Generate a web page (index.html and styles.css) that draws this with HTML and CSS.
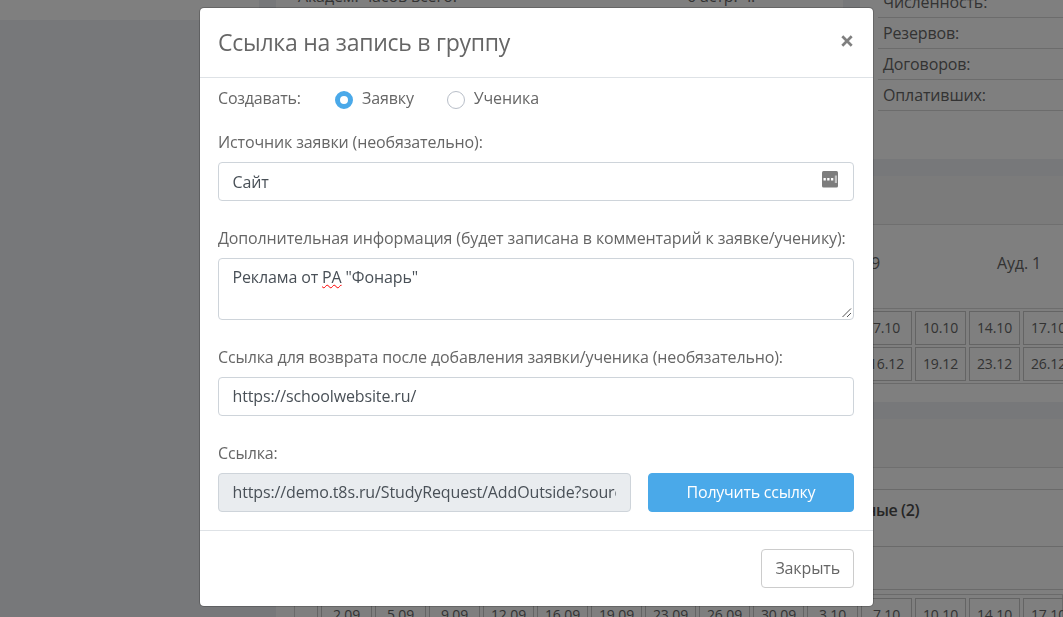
FILE: index.html
```
<!DOCTYPE html>
<html lang="ru">
<head>
    <meta charset="UTF-8">
    <meta name="viewport" content="width=device-width, initial-scale=1.0">
    <title>Ссылка на запись в группу</title>
    <link rel="stylesheet" href="styles.css">
</head>
<body>
    <div class="page">
        <aside class="sidebar"></aside>
        <main class="content">
            <div class="top-cards">
                <div class="card info">
                    <span>Академ. часов всего:</span>
                    <span>6 астр. ч.</span>
                </div>
                <div class="card stats">
                    <div class="stats-row">Численность:</div>
                    <div class="stats-row">Резервов:</div>
                    <div class="stats-row">Договоров:</div>
                    <div class="stats-row">Оплативших:</div>
                </div>
            </div>

            <div class="card schedule">
                <div class="card-header"></div>
                <div class="schedule-row">
                    <span>9</span>
                    <span>Ауд. 1</span>
                </div>
                <div class="days">
                    <span class="day">7.10</span>
                    <span class="day">10.10</span>
                    <span class="day">14.10</span>
                    <span class="day">17.10</span>
                    <span class="day">16.12</span>
                    <span class="day">19.12</span>
                    <span class="day">23.12</span>
                    <span class="day">26.12</span>
                </div>
            </div>

            <div class="card students">
                <div class="card-header"></div>
                <div class="spacer"></div>
                <div class="students-title">ные (2)</div>
                <div class="students-filter"></div>
                <div class="students-head">
                    <span class="num"></span>
                    <div class="days">
                        <span class="day">2.09</span>
                        <span class="day">5.09</span>
                        <span class="day">9.09</span>
                        <span class="day">12.09</span>
                        <span class="day">16.09</span>
                        <span class="day">19.09</span>
                        <span class="day">23.09</span>
                        <span class="day">26.09</span>
                        <span class="day">30.09</span>
                        <span class="day">3.10</span>
                        <span class="day">7.10</span>
                        <span class="day">10.10</span>
                        <span class="day">14.10</span>
                        <span class="day">17.10</span>
                    </div>
                </div>
            </div>
        </main>
    </div>

    <div class="backdrop">
        <div class="modal">
            <div class="modal-header">
                <h5 class="modal-title">Ссылка на запись в группу</h5>
                <button class="close" type="button" aria-label="Закрыть">
                    <svg width="12" height="12" viewBox="0 0 12 12"><path d="M1.3 1.3L10.7 10.7M10.7 1.3L1.3 10.7" stroke="#7f7f7f" stroke-width="2.7"/></svg>
                </button>
            </div>
            <div class="modal-body">
                <div class="radios">
                    <span class="radios-label">Создавать:</span>
                    <label class="radio"><input type="radio" name="type" checked>Заявку</label>
                    <label class="radio"><input type="radio" name="type">Ученика</label>
                </div>

                <label class="label" for="source">Источник заявки (необязательно):</label>
                <div class="control">
                    <input class="input" id="source" type="text" value="Сайт">
                    <svg class="autofill" width="16" height="17" viewBox="0 0 16 17">
                        <rect width="16" height="16.5" rx="1.5" fill="#7d7d7d"/>
                        <path d="M1.5 7h2.3v2.5H1.5zM5.2 7h2.3v2.5H5.2zM9 7h2.3v2.5H9z" fill="#fff"/>
                        <path d="M12.8 4.5H15v7.5h-2.2z" fill="#c4c4c4"/>
                    </svg>
                </div>

                <label class="label">Дополнительная информация (будет записана в комментарий к заявке/ученику):</label>
                <div class="control textarea">
                    Реклама от <span class="misspelled">РА</span> "Фонарь"
                    <svg class="grip" width="10" height="10" viewBox="0 0 10 10"><path d="M.5 9L9 .5M5 9L9 5" stroke="#555" fill="none"/></svg>
                </div>

                <label class="label" for="back">Ссылка для возврата после добавления заявки/ученика (необязательно):</label>
                <div class="control">
                    <input class="input url" id="back" type="text" value="https://schoolwebsite.ru/">
                </div>

                <label class="label" for="link">Ссылка:</label>
                <div class="link-row">
                    <input class="input url" id="link" type="text" readonly value="https://demo.t8s.ru/StudyRequest/AddOutside?source">
                    <button class="btn btn-primary" type="button">Получить ссылку</button>
                </div>
            </div>
            <div class="modal-footer">
                <button class="btn btn-default" type="button">Закрыть</button>
            </div>
        </div>
    </div>
</body>
</html>
```

FILE: styles.css
```
* {
    box-sizing: border-box;
}
body {
    margin: 0;
    height: 617px;
    overflow: hidden;
    font-family: "Open Sans", "Noto Sans", sans-serif;
    font-size: 16px;
    line-height: 24px;
    letter-spacing: -.13px;
    color: #666;
    background: #eef0f4;
}

/* page under the dialog */
.page {
    display: grid;
    grid-template-columns: 259px 1fr;
    margin-top: -13px;
}
.sidebar {
    height: 33px;
    background: #fff;
}
.content {
    padding-left: 17px;
    min-width: 0;
}
.card {
    background: #fff;
    overflow: hidden;
}
.card-header {
    height: 49px;
    background: #f7f7f7;
    border-bottom: 1px solid #dfdfdf;
}
.top-cards {
    display: grid;
    grid-template-columns: 567px 1fr;
    gap: 17px;
    height: 172px;
}
.info {
    display: grid;
    grid-template-columns: 389px 1fr;
    padding-left: 22px;
    line-height: 18px;
}
.stats {
    padding-left: 18px;
}
.stats-row {
    height: 31px;
    padding-left: 5px;
    line-height: 31px;
    border-bottom: 1px solid #d8d8d8;
}
.schedule {
    height: 226px;
    margin-top: 17px;
}
.schedule-row {
    display: grid;
    grid-template-columns: 126px 1fr;
    height: 84px;
    padding-left: 595px;
    line-height: 77px;
    border-bottom: 1px solid #dadada;
}
.days {
    display: grid;
    grid-template-columns: repeat(14, 51px);
    gap: 2px 3px;
}
.schedule .days {
    grid-template-columns: repeat(4, 51px);
    height: 75px;
    padding: 2px 0 2px 585px;
    border-bottom: 1px solid #d4d4d4;
}
.day {
    height: 34px;
    font-size: 14px;
    line-height: 32px;
    text-align: center;
    border: 1px solid #c8c8c8;
}
.students {
    height: 220px;
    margin-top: 17px;
}
.spacer {
    height: 22px;
    border-bottom: 1px solid #d4d4d4;
}
.students-title {
    height: 57px;
    padding-left: 590px;
    font-weight: 600;
    letter-spacing: -.4px;
    line-height: 41px;
    color: #4c4c4c;
    border-bottom: 1px solid #d4d4d4;
}
.students-filter {
    height: 43px;
    border-bottom: 1px solid #d4d4d4;
}
.students-head {
    display: flex;
    gap: 3px;
    height: 60px;
    margin: 4px 0 0 18px;
    border: 1px solid #d4d4d4;
}
.students-head .num {
    flex: 0 0 23px;
    border-right: 1px solid #c8c8c8;
}
.students-head .days {
    padding-top: 3px;
}

/* dialog */
.backdrop {
    position: fixed;
    inset: 0;
    padding: 7px 0 0 199px;
    background: rgba(0, 0, 0, .5);
}
.modal {
    width: 675px;
    height: 600px;
    background: #fff;
    background-clip: padding-box;
    border: 1px solid rgba(0, 0, 0, .2);
    border-radius: 5px;
}
.modal-header {
    display: flex;
    justify-content: space-between;
    height: 70px;
    padding: 17px 20px 0 18px;
    border-bottom: 1px solid #dee2e6;
}
.modal-title {
    margin: 0;
    font-size: 23px;
    font-weight: 400;
    letter-spacing: -.25px;
    line-height: 35px;
}
.close {
    height: 12px;
    margin-top: 10px;
    padding: 0;
    border: 0;
    background: none;
}
.close svg {
    display: block;
}
.modal-body {
    height: 452px;
    padding: 8px 19px 0 18px;
}
.radios {
    display: flex;
    height: 32px;
}
.radios-label {
    width: 117px;
    letter-spacing: -.2px;
}
.radio {
    display: flex;
    gap: 9px;
    margin-right: 33px;
}
.radio input {
    appearance: none;
    width: 18px;
    height: 18px;
    margin: 5px 0 0;
    border: 1px solid #b8bec8;
    border-radius: 50%;
    background: #fff;
}
.radio input:checked {
    border: 5.5px solid #4aa9e9;
}
.label {
    display: block;
    height: 36px;
    padding-top: 12px;
    line-height: 24px;
    white-space: nowrap;
}
.control {
    position: relative;
    margin: 8px 0 13px;
}
.input {
    display: block;
    width: 100%;
    height: 39px;
    padding: 0 14px 0 13.5px;
    font: inherit;
    letter-spacing: inherit;
    color: #495057;
    border: 1px solid #ced4da;
    border-radius: 4px;
    background: #fff;
    outline: none;
}
.input.url {
    padding-bottom: 2px;
}
.input[readonly] {
    background: #e9ecef;
}
.autofill {
    position: absolute;
    right: 16px;
    top: 9px;
}
.textarea {
    height: 62px;
    padding: 6px 13.5px;
    color: #495057;
    border: 1px solid #ced4da;
    border-radius: 4px;
}
.grip {
    position: absolute;
    right: 1px;
    bottom: 1px;
}
.misspelled {
    text-decoration: underline wavy #f00 1px;
    text-decoration-skip-ink: none;
    text-underline-offset: 1px;
}
.link-row {
    display: grid;
    grid-template-columns: 413px 206px;
    gap: 17px;
    margin-top: 8px;
}
.btn {
    height: 39px;
    padding: 0 13px 2px;
    font: inherit;
    letter-spacing: inherit;
    border: 1px solid #ccc;
    border-radius: 4px;
}
.btn-primary {
    color: #fff;
    font-weight: 500;
    letter-spacing: -.25px;
    border-color: #4aa9e9;
    background: #4aa9e9;
}
.btn-default {
    color: #666;
    background: #fff;
}
.modal-footer {
    display: flex;
    justify-content: flex-end;
    padding: 18px 19px 0 0;
    border-top: 1px solid #dee2e6;
}
```
